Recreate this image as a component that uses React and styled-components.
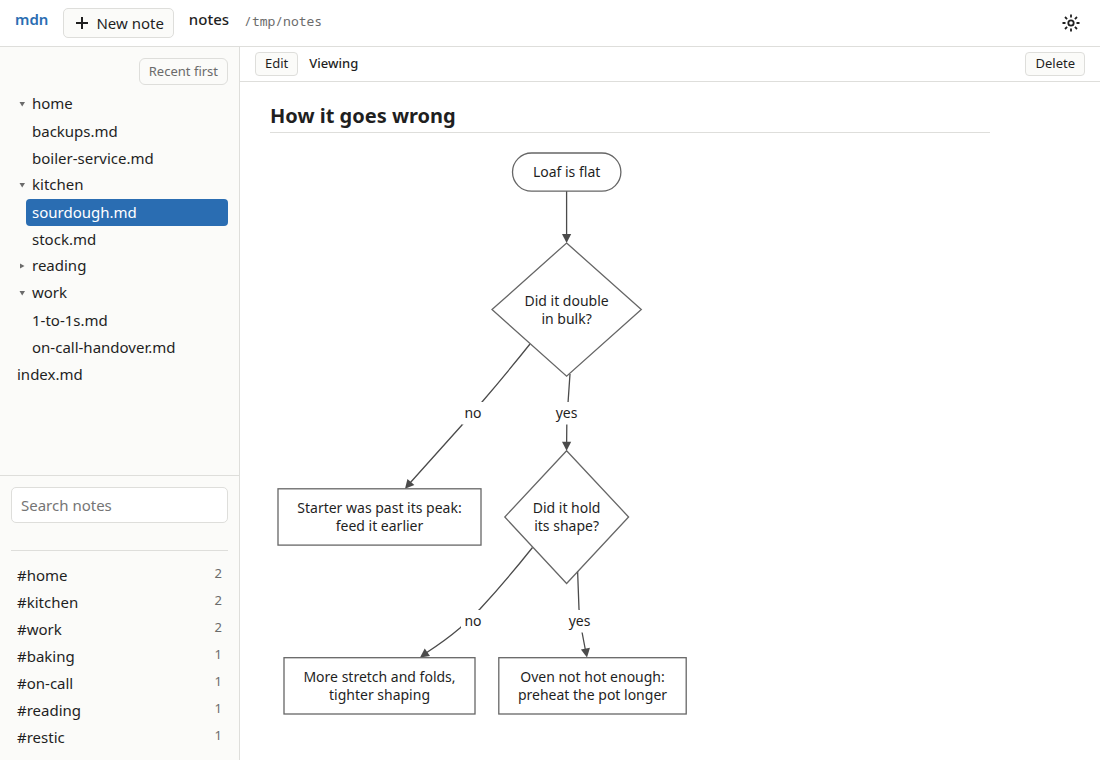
import styled, { createGlobalStyle } from 'styled-components'

const GlobalStyle = createGlobalStyle`
  * {
    box-sizing: border-box;
  }
  body {
    margin: 0;
    background: #fff;
    color: #1f1f1f;
    font-family: "Noto Sans", sans-serif;
    font-size: 15px;
    line-height: 23px;
  }
  button, input {
    font-family: inherit;
    color: inherit;
  }
`;

const Page = styled.div`
  display: flex;
  flex-direction: column;
  height: 100vh;
`;

const Header = styled.header`
  flex: none;
  display: flex;
  align-items: center;
  gap: 15px;
  padding: 8px 15px;
  border-bottom: 1px solid #dededb;
`;

const Brand = styled.a`
  align-self: flex-start;
  color: #2a6db2;
  font-weight: 600;
  text-decoration: none;
`;

const Vault = styled.span`
  align-self: flex-start;
  font-weight: 500;
`;

const VaultPath = styled.code`
  align-self: flex-start;
  flex: 1;
  padding-top: 2px;
  color: #6b6b6b;
  font-family: "Noto Sans Mono", "DejaVu Sans Mono", monospace;
  font-size: 13px;
`;

const Button = styled.button`
  height: 24px;
  padding: 0 9px 2px;
  border: 1px solid #dededb;
  border-radius: 4px;
  background: #fbfbf9;
  font-size: 13px;
  line-height: 20px;
  cursor: pointer;
`;

const NewButton = styled(Button)`
  display: flex;
  align-items: center;
  gap: 5px;
  height: 30px;
  padding: 0 9px;
  border-radius: 5px;
  font-size: 15px;
`;

const SortButton = styled(Button)`
  align-self: flex-end;
  height: 27px;
  border-radius: 6px;
  color: #6b6b6b;
`;

const IconButton = styled.button`
  display: flex;
  padding: 5px;
  border: none;
  background: none;
  cursor: pointer;
`;

const Body = styled.div`
  flex: 1;
  min-height: 0;
  display: flex;
`;

const Sidebar = styled.aside`
  flex: none;
  width: 240px;
  display: flex;
  flex-direction: column;
  border-right: 1px solid #dededb;
  background: #fbfbf9;
`;

const Files = styled.nav`
  flex: 1;
  min-height: 0;
  display: flex;
  flex-direction: column;
  padding: 11px;
  overflow: hidden;
`;

const List = styled.ul`
  margin: ${({ $top }) => $top || 0}px 0 0;
  padding: 0 0 0 ${({ $nested }) => ($nested ? 15 : 0)}px;
  list-style: none;
`;

const Folder = styled.button`
  display: flex;
  align-items: center;
  width: 100%;
  height: 27px;
  padding: 0 6px 2px;
  border: none;
  background: none;
  font-size: 15px;
  line-height: 23px;
  cursor: pointer;
`;

const Arrow = styled.svg`
  width: 10px;
  height: 10px;
  margin-right: 5px;
  fill: #6b6b6b;
`;

const FileLink = styled.a`
  display: flex;
  justify-content: space-between;
  height: 27px;
  padding: 2px 6px;
  border-radius: 4px;
  background: ${({ $active }) => ($active ? '#2a6db2' : 'none')};
  color: ${({ $active }) => ($active ? '#fff' : 'inherit')};
  text-decoration: none;
`;

const Count = styled.span`
  color: #6b6b6b;
  font-size: 13px;
  line-height: 18px;
`;

const Finder = styled.div`
  flex: none;
  height: 40%;
  padding: 11px;
  border-top: 1px solid #dededb;
  overflow: hidden;
`;

const Search = styled.input`
  display: block;
  width: 100%;
  height: 36px;
  padding: 0 9px;
  border: 1px solid #dededb;
  border-radius: 5px;
  background: #fff;
  font-size: 15px;
  &::placeholder {
    color: #757575;
  }
`;

const Tags = styled.div`
  margin-top: 27px;
  padding-top: 11px;
  border-top: 1px solid #dededb;
`;

const Main = styled.main`
  flex: 1;
  min-width: 0;
  display: flex;
  flex-direction: column;
`;

const Toolbar = styled.div`
  flex: none;
  display: flex;
  align-items: center;
  gap: 11px;
  padding: 5px 15px;
  border-bottom: 1px solid #dededb;
  font-size: 13px;
`;

const Mode = styled.span`
  flex: 1;
  padding-bottom: 2px;
  font-weight: 500;
  line-height: 20px;
`;

const Note = styled.article`
  flex: 1;
  min-height: 0;
  max-width: 780px;
  padding: 19px 30px;
  overflow: hidden;
`;

const Title = styled.h2`
  margin: 0 0 12px;
  padding-bottom: 1px;
  border-bottom: 1px solid #dededb;
  font-size: 20px;
  font-weight: 700;
  line-height: 30px;
`;

const Chart = styled.svg`
  display: block;
  fill: none;
  stroke: #666;
  stroke-width: 1.3;
  .edge {
    stroke: #4b4b4b;
  }
  .head {
    fill: #4b4b4b;
    stroke: none;
  }
  .gap {
    fill: #fff;
    stroke: none;
  }
`;

const ChartText = styled.text`
  fill: #1f1f1f;
  stroke: none;
  font-size: 14px;
  text-anchor: middle;
`;

const folders = [
  { name: 'home', open: true, files: ['backups.md', 'boiler-service.md'] },
  { name: 'kitchen', open: true, files: ['sourdough.md', 'stock.md'] },
  { name: 'reading', open: false, files: [] },
  { name: 'work', open: true, files: ['1-to-1s.md', 'on-call-handover.md'] },
];

const tags = [
  ['home', 2],
  ['kitchen', 2],
  ['work', 2],
  ['baking', 1],
  ['on-call', 1],
  ['reading', 1],
  ['restic', 1],
];

const Label = ({ x, y, lines }) => (
  <ChartText y={y}>
    {lines.map((line, i) => (
      <tspan key={line} x={x} y={y + i * 18}>{line}</tspan>
    ))}
  </ChartText>
);

const EdgeLabel = ({ x, y, width, text }) => (
  <>
    <rect className="gap" x={x - width / 2} y={y - 16} width={width} height="22.5" />
    <ChartText x={x} y={y}>{text}</ChartText>
  </>
);

const Head = ({ x, y, angle }) => (
  <path className="head" d="M0 0L-4.6 -9H4.6Z" transform={`translate(${x} ${y}) rotate(${angle})`} />
);

const Flowchart = () => (
  <Chart width="424" height="577" viewBox="0 0 424 577" role="img" aria-label="Why the loaf is flat">
    <path className="edge" d="M296.6 46V92" />
    <path className="edge" d="M260 199Q236 229 212 257L192 280L140 338" />
    <path className="edge" d="M300 229L298 258L296.8 280L296.6 300" />
    <path className="edge" d="M262.5 402.5Q235 437 210 464L190 483Q176 495 156 508" />
    <path className="edge" d="M307.6 426L309 464L312 487L315.6 506" />
    <Head x={296.6} y={98} angle={0} />
    <Head x={135} y={343.7} angle={41} />
    <Head x={296.6} y={305.7} angle={0} />
    <Head x={150} y={512.5} angle={55} />
    <Head x={317} y={512.5} angle={-10} />

    <rect x="242.5" y="8" width="108.4" height="38.2" rx="19.1" />
    <path d="M296.6 98L371.3 164.6L296.6 231.2L222 164.6Z" />
    <path d="M296.6 305.7L358.6 372L296.6 438.5L234.8 372Z" />
    <rect x="8" y="343.8" width="203" height="56.3" />
    <rect x="14" y="512.7" width="191" height="56.3" />
    <rect x="228.8" y="512.7" width="187.4" height="56.3" />

    <Label x={296.6} y={32} lines={['Loaf is flat']} />
    <Label x={296.6} y={161} lines={['Did it double', 'in bulk?']} />
    <Label x={296.6} y={368} lines={['Did it hold', 'its shape?']} />
    <Label x={109.5} y={368} lines={['Starter was past its peak:', 'feed it earlier']} />
    <Label x={109.5} y={537} lines={['More stretch and folds,', 'tighter shaping']} />
    <Label x={322.5} y={537} lines={['Oven not hot enough:', 'preheat the pot longer']} />
    <EdgeLabel x={203} y={273} width={22} text="no" />
    <EdgeLabel x={296.6} y={273} width={28} text="yes" />
    <EdgeLabel x={203} y={481} width={24} text="no" />
    <EdgeLabel x={309.5} y={481} width={28} text="yes" />
  </Chart>
);

const App = () => {
  return (
    <Page>
      <GlobalStyle />
      <Header>
        <Brand href="#">mdn</Brand>
        <NewButton>
          <svg width="18" height="18" viewBox="0 0 18 18" fill="none" stroke="currentColor" strokeWidth="2">
            <path d="M9 3V15M3 9H15" />
          </svg>
          New note
        </NewButton>
        <Vault>notes</Vault>
        <VaultPath>/tmp/notes</VaultPath>
        <IconButton aria-label="Toggle theme">
          <svg width="18" height="18" viewBox="0 0 18 18" fill="none" stroke="currentColor" strokeWidth="1.8">
            <circle cx="9" cy="9" r="2.7" />
            <path d="M9 .5V3.5M9 14.5V17.5M.5 9H3.5M14.5 9H17.5M3 3L5.1 5.1M12.9 12.9L15 15M3 15L5.1 12.9M12.9 5.1L15 3" />
          </svg>
        </IconButton>
      </Header>
      <Body>
        <Sidebar>
          <Files>
            <SortButton>Recent first</SortButton>
            <List $top={6}>
              {folders.map((folder) => (
                <li key={folder.name}>
                  <Folder aria-expanded={folder.open}>
                    <Arrow viewBox="0 0 10 10">
                      <path d={folder.open ? 'M2.5 3H8L5.2 7.5Z' : 'M3 2.5V7.5L7.5 5Z'} />
                    </Arrow>
                    {folder.name}
                  </Folder>
                  <List $nested>
                    {folder.files.map((file) => (
                      <li key={file}>
                        <FileLink href="#" $active={file === 'sourdough.md'}>{file}</FileLink>
                      </li>
                    ))}
                  </List>
                </li>
              ))}
              <li>
                <FileLink href="#">index.md</FileLink>
              </li>
            </List>
          </Files>
          <Finder>
            <Search type="search" placeholder="Search notes" aria-label="Search notes" />
            <Tags>
              <List>
                {tags.map(([tag, count]) => (
                  <li key={tag}>
                    <FileLink href="#">
                      #{tag}
                      <Count>{count}</Count>
                    </FileLink>
                  </li>
                ))}
              </List>
            </Tags>
          </Finder>
        </Sidebar>
        <Main>
          <Toolbar>
            <Button>Edit</Button>
            <Mode>Viewing</Mode>
            <Button>Delete</Button>
          </Toolbar>
          <Note>
            <Title>How it goes wrong</Title>
            <Flowchart />
          </Note>
        </Main>
      </Body>
    </Page>
  )
}

export default App
